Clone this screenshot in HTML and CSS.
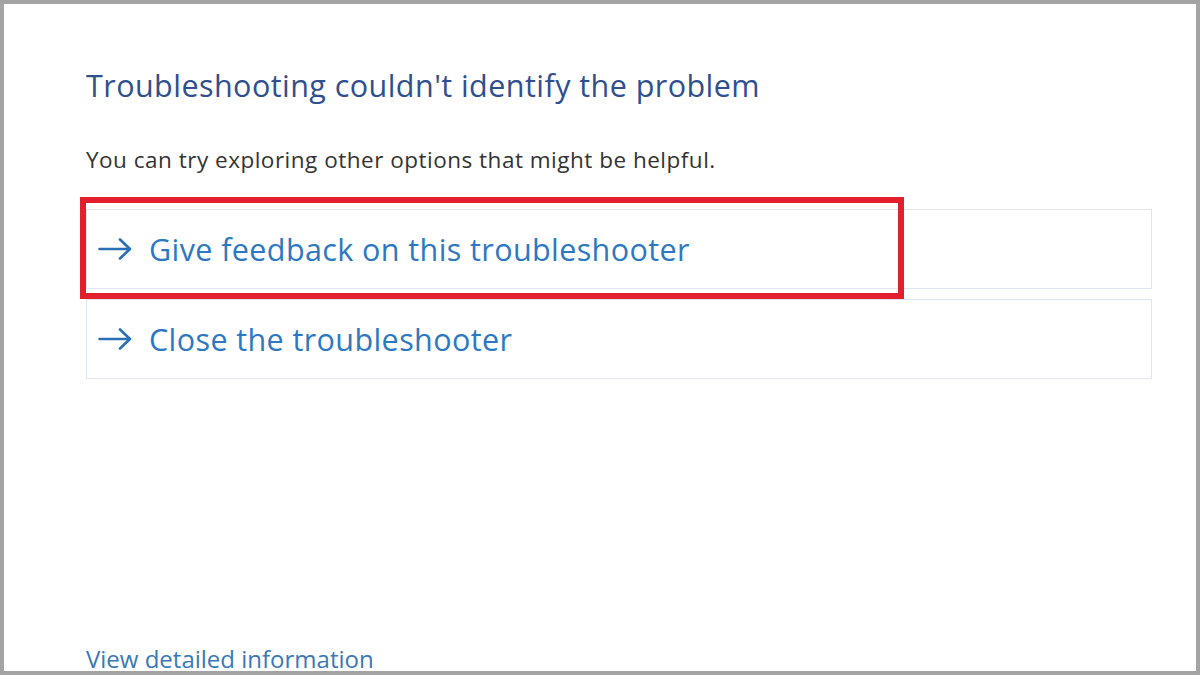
FILE: index.html
```html
<!DOCTYPE html>
<html lang="en">
<head>
    <meta charset="UTF-8">
    <title>Troubleshooter</title>
    <link rel="stylesheet" href="styles.css">
</head>
<body>
    <div class="frame">
        <h1 class="title">Troubleshooting couldn't identify the problem</h1>
        <p class="intro">You can try exploring other options that might be helpful.</p>

        <!-- options -->
        <div class="options">
            <div class="option">
                <svg class="arrow" width="34" height="22" viewBox="0 0 34 22">
                    <path d="M1.5 11 H32 M22 1.5 L32 11 L22 20.5" fill="none" stroke="currentColor" stroke-width="2.6" stroke-linecap="round" stroke-linejoin="round"/>
                </svg>
                <span class="label">Give feedback on this troubleshooter</span>
                <div class="marker"></div>
            </div>
            <div class="option">
                <svg class="arrow" width="34" height="22" viewBox="0 0 34 22">
                    <path d="M1.5 11 H32 M22 1.5 L32 11 L22 20.5" fill="none" stroke="currentColor" stroke-width="2.6" stroke-linecap="round" stroke-linejoin="round"/>
                </svg>
                <span class="label">Close the troubleshooter</span>
            </div>
        </div>

        <a class="details" href="#">View detailed information</a>
    </div>
</body>
</html>
```

FILE: styles.css
```css
html, body {
    margin: 0;
    padding: 0;
    background-color: #ffffff;
}
.frame {
    box-sizing: border-box;
    width: 1200px;
    height: 675px;
    border: 4px solid #a3a3a3;
    padding: 60px 44px 0 82px;
    font-family: "Open Sans", "Noto Sans", sans-serif;
    overflow: hidden;
    display: flex;
    flex-direction: column;
}
.title {
    margin: 0;
    font-size: 30.5px;
    letter-spacing: 0.45px;
    font-weight: 400;
    color: #2f4f8f;
    line-height: 42px;
}
.intro {
    margin: 40px 0 0 0;
    font-size: 22.5px;
    letter-spacing: 0.5px;
    color: #333333;
    line-height: 28px;
}
.options {
    margin-top: 35px;
    display: flex;
    flex-direction: column;
    gap: 10px;
}
.option {
    position: relative;
    height: 80px;
    box-sizing: border-box;
    border: 1px solid #dfe6ef;
    display: flex;
    align-items: center;
    padding-left: 11px;
    color: #2c78c2;
    font-size: 30.5px;
    letter-spacing: 0.4px;
}
.option .arrow {
    margin-right: 17px;
    flex-shrink: 0;
    color: #2a6fb5;
}
.marker {
    position: absolute;
    left: -7px;
    top: -13px;
    width: 824px;
    height: 102px;
    box-sizing: border-box;
    border: 6px solid #e21f2c;
}
.details {
    margin-top: auto;
    margin-bottom: -3px;
    font-size: 24px;
    color: #3a78b8;
    text-decoration: none;
    line-height: 30px;
}
```
